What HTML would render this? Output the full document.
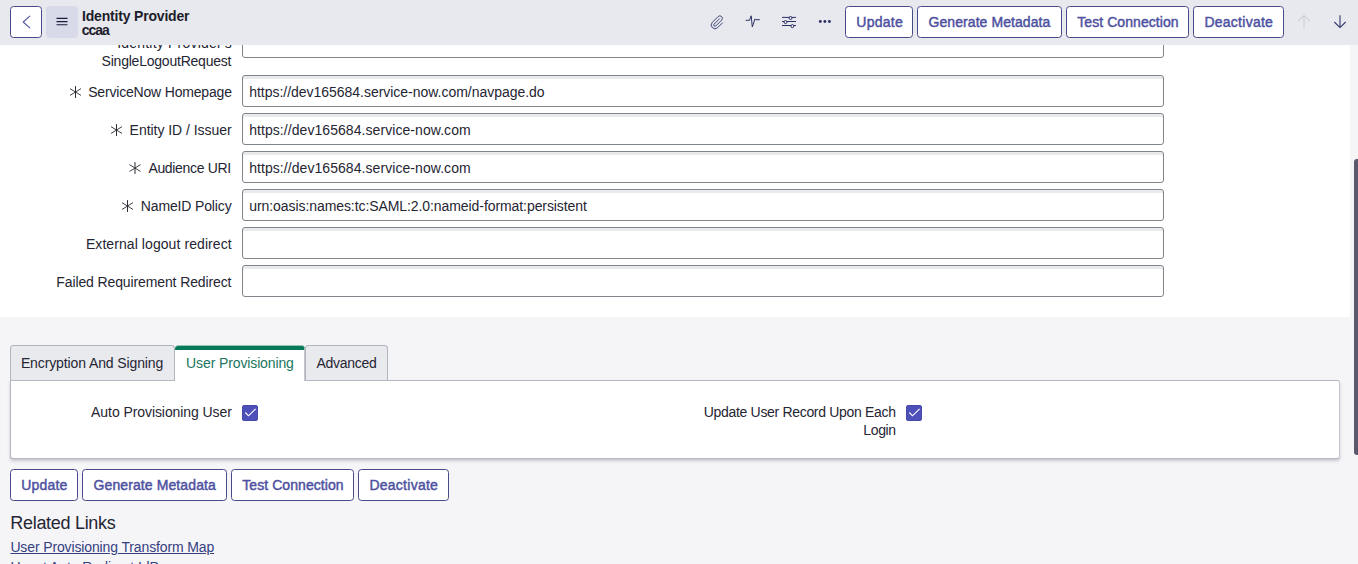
<!DOCTYPE html>
<html lang="en">
<head>
<meta charset="utf-8">
<title>Identity Provider | ccaa</title>
<style>
*{box-sizing:border-box;margin:0;padding:0}
html,body{width:1358px;height:564px;overflow:hidden;background:#f5f5f8;font-family:"Liberation Sans",sans-serif;font-size:14px;color:#1d1d2b}
#app{position:relative;width:1358px;height:564px;overflow:hidden;background:#f5f5f8}
.abs{position:absolute;white-space:nowrap}
.tx{position:absolute;z-index:4;white-space:nowrap;font-size:14px;line-height:18px;color:#252533}
#hdr{position:absolute;left:0;top:0;width:1358px;height:45px;background:#e7e9ee;z-index:5}
#formbg{position:absolute;left:0;top:45px;width:1350px;height:272px;background:#fff}
.btn{position:absolute;height:32px;border:1px solid #484b88;border-radius:3.5px;background:#fff}
.bt{position:absolute;white-space:nowrap;font-size:14px;line-height:18px;font-weight:normal;-webkit-text-stroke:0.45px #4d50a0;color:#4d50a0}
.title{font-weight:bold;color:#1d1d2b}
.inp{position:absolute;left:242px;width:922px;height:32px;border:1px solid #80848b;border-radius:3px;background:#fff;box-shadow:inset 0 3px 0 #e9eaeb}
.tab{position:absolute;top:345px;height:35px;border:1px solid #b1b4bd;border-bottom:none;border-radius:3.5px 3.5px 0 0;background:#e9eaee}
.tab.act{background:#fff;border:none;border-right:1px solid #c4c7cf;border-top:4px solid #057a58;z-index:3;top:346px;height:35px;box-shadow:0 -1px 0 0 rgba(5,122,88,.4)}
#panel{position:absolute;left:10px;top:380px;width:1330px;height:79px;background:#fff;border:1px solid #b4b7c0;border-radius:0 3px 3px 3px;border-right-color:#c6c8d0;box-shadow:0 2px 3px rgba(60,60,80,.25)}
.cb{position:absolute;width:16px;height:16px;border-radius:2px;background:#4e50b9;border:1px solid #484aa8}
.link{color:#35407f;text-decoration:underline;line-height:20px}
svg{position:absolute;overflow:visible}
</style>
</head>
<body>
<div id="app">
  <div id="formbg"></div>

  <!-- form rows -->
  <span class="tx" style="top:34px;left:117.2px;letter-spacing:0.202px">Identity Provider's</span>
  <span class="tx" style="top:52px;left:101.6px;letter-spacing:-0.222px">SingleLogoutRequest</span>
  <div class="inp" style="top:26px"></div>

  <span class="tx" style="top:83px;left:88.2px;letter-spacing:-0.184px">ServiceNow Homepage</span>
  <div class="inp" style="top:75px"></div>
  <span class="tx" style="top:83px;left:249.2px;letter-spacing:-0.025px">https://dev165684.service-now.com/navpage.do</span>

  <span class="tx" style="top:121px;left:129.6px;letter-spacing:-0.039px">Entity ID / Issuer</span>
  <div class="inp" style="top:113px"></div>
  <span class="tx" style="top:121px;left:249.2px;letter-spacing:0.063px">https://dev165684.service-now.com</span>

  <span class="tx" style="top:159px;left:148.4px;letter-spacing:-0.328px">Audience URI</span>
  <div class="inp" style="top:151px"></div>
  <span class="tx" style="top:159px;left:249.2px;letter-spacing:0.063px">https://dev165684.service-now.com</span>

  <span class="tx" style="top:197px;left:140.8px;letter-spacing:-0.145px">NameID Policy</span>
  <div class="inp" style="top:189px"></div>
  <span class="tx" style="top:197px;left:249.3px;letter-spacing:-0.078px">urn:oasis:names:tc:SAML:2.0:nameid-format:persistent</span>

  <span class="tx" style="top:235px;left:85.9px;letter-spacing:0.078px">External logout redirect</span>
  <div class="inp" style="top:227px"></div>

  <span class="tx" style="top:273px;left:56.3px;letter-spacing:-0.115px">Failed Requirement Redirect</span>
  <div class="inp" style="top:265px"></div>

  <!-- mandatory stars -->
  <svg style="left:68px;top:85px" width="15" height="15" viewBox="-7 -7 15 15"><g transform="translate(0.50 0.05)"><path d="M0-5.9V5.9" stroke="#2b2b33" stroke-width="1" fill="none"/><path d="M-5.5-3.4L5.5 3.4M-5.5 3.4L5.5-3.4" stroke="#2b2b33" stroke-width="0.9" fill="none"/></g></svg>
  <svg style="left:109px;top:123px" width="15" height="15" viewBox="-7 -7 15 15"><g transform="translate(0.50 0.05)"><path d="M0-5.9V5.9" stroke="#2b2b33" stroke-width="1" fill="none"/><path d="M-5.5-3.4L5.5 3.4M-5.5 3.4L5.5-3.4" stroke="#2b2b33" stroke-width="0.9" fill="none"/></g></svg>
  <svg style="left:128px;top:161px" width="15" height="15" viewBox="-7 -7 15 15"><g transform="translate(0.00 0.05)"><path d="M0-5.9V5.9" stroke="#2b2b33" stroke-width="1" fill="none"/><path d="M-5.5-3.4L5.5 3.4M-5.5 3.4L5.5-3.4" stroke="#2b2b33" stroke-width="0.9" fill="none"/></g></svg>
  <svg style="left:120px;top:199px" width="15" height="15" viewBox="-7 -7 15 15"><g transform="translate(0.50 0.05)"><path d="M0-5.9V5.9" stroke="#2b2b33" stroke-width="1" fill="none"/><path d="M-5.5-3.4L5.5 3.4M-5.5 3.4L5.5-3.4" stroke="#2b2b33" stroke-width="0.9" fill="none"/></g></svg>

  <!-- header -->
  <div id="hdr">
    <div class="btn" style="left:10px;top:6px;width:32px"></div>
    <svg style="left:10px;top:6px" width="32" height="32" viewBox="0 0 32 32"><path d="M19.8 10.2L13.2 16L19.8 21.8" stroke="#5557a6" stroke-width="1.1" fill="none" stroke-linecap="round" stroke-linejoin="round"/></svg>
    <div class="btn" style="left:46px;top:6px;width:32px;background:#d9dae9;border-color:#d9dae9"></div>
    <svg style="left:46px;top:6px" width="32" height="32" viewBox="0 0 32 32"><path d="M10.5 12.4H21.5M10.5 15.6H21.5M10.5 18.8H21.5" stroke="#1d1d3a" stroke-width="1.1" fill="none"/></svg>
    <span class="tx title" style="top:6.6px;left:82.0px;letter-spacing:-0.186px">Identity Provider</span>
    <span class="tx title" style="top:21.4px;left:81.8px;letter-spacing:-1.033px">ccaa</span>

    <!-- paperclip -->
    <svg style="left:710.1px;top:15.0px" width="15" height="15" viewBox="0 0 24 24"><path d="M19.9 12.6l-7.65 7.64a6 6 0 0 1-8.49-8.49l9.19-9.19a4 4 0 0 1 5.66 5.66l-9.2 9.19a2 2 0 0 1-2.83-2.83l8.49-8.48" stroke="#3c3f73" stroke-width="1.55" fill="none" stroke-linecap="round" stroke-linejoin="round"/></svg>
    <!-- activity -->
    <svg style="left:744px;top:13px" width="18" height="18" viewBox="0 0 18 18"><path d="M2.1 7.3H5.5L7.2 2.8L8.3 14L11 5.9L11.8 6.7H15.4" stroke="#2d3166" stroke-width="1" fill="none" stroke-linejoin="round" stroke-linecap="round"/></svg>
    <!-- sliders -->
    <svg style="left:780px;top:13px" width="18" height="18" viewBox="0 0 18 18"><path d="M2 4.4H16M2 8.5H16M2 12.5H16" stroke="#2d3166" stroke-width="1" fill="none"/><circle cx="10.5" cy="5" r="1.5" fill="#e7e9ee" stroke="#2d3166" stroke-width="1"/><circle cx="5.5" cy="9.1" r="1.5" fill="#e7e9ee" stroke="#2d3166" stroke-width="1"/><circle cx="12.4" cy="13.1" r="1.5" fill="#e7e9ee" stroke="#2d3166" stroke-width="1"/></svg>
    <!-- more -->
    <svg style="left:816px;top:13px" width="18" height="18" viewBox="0 0 18 18"><circle cx="4.3" cy="8.5" r="1.45" fill="#2d3166"/><circle cx="8.9" cy="8.5" r="1.45" fill="#2d3166"/><circle cx="13.4" cy="8.5" r="1.45" fill="#2d3166"/></svg>

    <div class="btn" style="left:845px;top:6px;width:68px"></div>
    <div class="btn" style="left:917px;top:6px;width:145px"></div>
    <div class="btn" style="left:1066px;top:6px;width:123px"></div>
    <div class="btn" style="left:1193px;top:6px;width:91px"></div>
    <span class="bt" style="top:13px;left:856.3px;letter-spacing:0.260px">Update</span>
    <span class="bt" style="top:13px;left:928.5px;letter-spacing:0.073px">Generate Metadata</span>
    <span class="bt" style="top:13px;left:1077.3px;letter-spacing:0.067px">Test Connection</span>
    <span class="bt" style="top:13px;left:1204.4px;letter-spacing:0.260px">Deactivate</span>

    <!-- up / down -->
    <svg style="left:1296px;top:13px" width="16" height="18" viewBox="0 0 16 18"><path d="M8 14.8V2.6M2.3 8L8 2.4L13.7 8" stroke="#cdd0db" stroke-width="1.1" fill="none"/></svg>
    <svg style="left:1332px;top:13px" width="16" height="18" viewBox="0 0 16 18"><path d="M8 2.2V14.4M2.3 9L8 14.6L13.7 9" stroke="#353868" stroke-width="1.1" fill="none"/></svg>
  </div>

  <!-- tabs -->
  <div id="panel"></div>
  <div class="tab" style="left:10px;width:165px"></div>
  <div class="tab" style="left:305px;width:83px"></div>
  <div class="tab act" style="left:175px;width:130px"></div>
  <span class="tx" style="top:354px;left:20.9px;letter-spacing:-0.113px">Encryption And Signing</span>
  <span class="tx" style="top:354px;color:#1b7560;left:186.1px;letter-spacing:-0.119px">User Provisioning</span>
  <span class="tx" style="top:354px;left:316.5px;letter-spacing:-0.275px">Advanced</span>

  <span class="tx" style="top:403px;left:91.1px;letter-spacing:-0.075px">Auto Provisioning User</span>
  <div class="cb" style="left:242px;top:405px"></div>
  <svg style="left:242px;top:405px" width="16" height="16" viewBox="0 0 16 16"><path d="M3.3 7.5L6.5 10.8L13.6 3.8" stroke="#fff" stroke-width="1.15" fill="none"/></svg>
  <span class="tx" style="top:403px;left:703.8px;letter-spacing:-0.319px">Update User Record Upon Each</span>
  <span class="tx" style="top:421px;left:863.3px;letter-spacing:-0.351px">Login</span>
  <div class="cb" style="left:906px;top:405px"></div>
  <svg style="left:906px;top:405px" width="16" height="16" viewBox="0 0 16 16"><path d="M3.3 7.5L6.5 10.8L13.6 3.8" stroke="#fff" stroke-width="1.15" fill="none"/></svg>

  <!-- bottom buttons -->
  <div class="btn" style="top:469px;left:10px;width:68px"></div>
  <div class="btn" style="top:469px;left:82px;width:145px"></div>
  <div class="btn" style="top:469px;left:231px;width:123px"></div>
  <div class="btn" style="top:469px;left:358px;width:91px"></div>
  <span class="bt" style="top:476px;left:21.2px;letter-spacing:0.200px">Update</span>
  <span class="bt" style="top:476px;left:93.5px;letter-spacing:0.105px">Generate Metadata</span>
  <span class="bt" style="top:476px;left:242.3px;letter-spacing:0.067px">Test Connection</span>
  <span class="bt" style="top:476px;left:369.4px;letter-spacing:0.260px">Deactivate</span>

  <span class="tx" style="top:512px;font-size:18px;line-height:22px;left:10.3px;letter-spacing:-0.300px">Related Links</span>
  <span class="tx link" style="top:537px;left:10.4px;letter-spacing:-0.129px">User Provisioning Transform Map</span>
  <span class="tx link" style="top:557px;left:10.4px;letter-spacing:-0.041px">Unset Auto Redirect IdP</span>

  <!-- scrollbar -->
  <div class="abs" style="left:1350px;top:45px;width:8px;height:519px;background:#f5f5f8"></div>
  <div class="abs" style="left:1354px;top:158.6px;width:8px;height:296.6px;background:#5b596d;border-radius:3px"></div>
</div>
</body>
</html>
